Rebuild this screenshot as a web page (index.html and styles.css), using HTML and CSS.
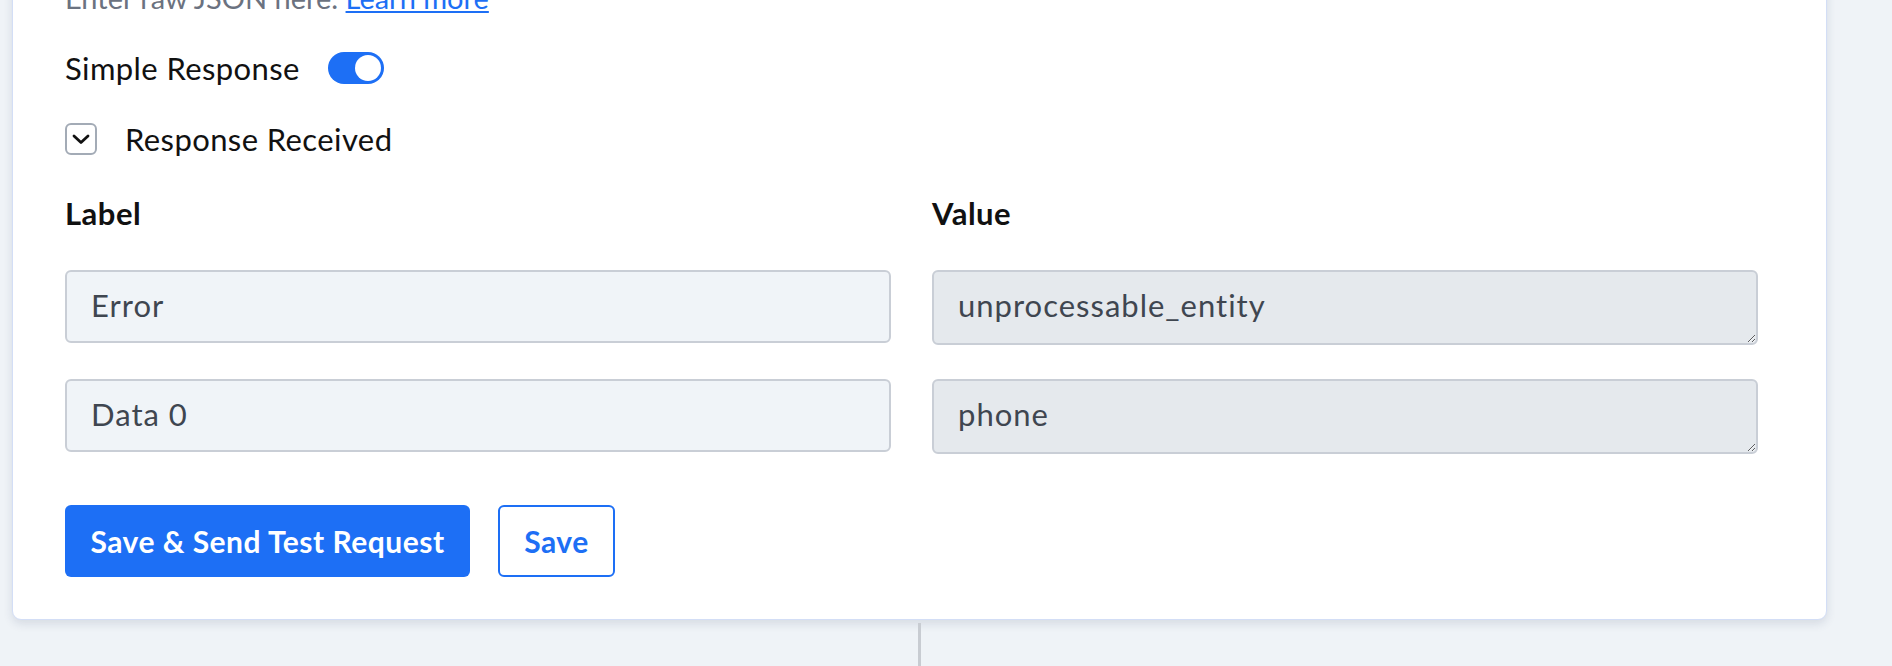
FILE: index.html
```html
<!DOCTYPE html>
<html lang="en">
<head>
  <meta charset="UTF-8">
  <meta name="viewport" content="width=device-width, initial-scale=1.0">
  <title>Webhook Step - Response</title>
  <link rel="stylesheet" href="styles.css">
</head>
<body>

<div class="flow">
  <div class="step-card">
    <p class="hint">Enter raw JSON here. <a href="#">Learn more</a></p>

    <div class="option-row">
      <span>Simple Response</span>
      <span class="toggle on"><span class="knob"></span></span>
    </div>

    <div class="option-row collapse-row">
      <span class="chevron-box">
        <svg width="18" height="18" viewBox="0 0 18 18"><path d="M2 6 L9 12.5 L16 6" fill="none" stroke="#111" stroke-width="2.8" stroke-linecap="round" stroke-linejoin="round"/></svg>
      </span>
      <span>Response Received</span>
    </div>

    <div class="response-grid">
      <div class="col-head">Label</div>
      <div class="col-head">Value</div>

      <input class="field label-field" type="text" value="Error" readonly>
      <textarea class="field value-field" readonly>unprocessable_entity</textarea>

      <input class="field label-field" type="text" value="Data 0" readonly>
      <textarea class="field value-field" readonly>phone</textarea>
    </div>

    <div class="actions">
      <button class="btn btn-primary">Save &amp; Send Test Request</button>
      <button class="btn btn-outline">Save</button>
    </div>
  </div>

  <div class="connector"></div>
</div>

</body>
</html>
```

FILE: styles.css
```css
/* General Styles */
body {
  font-family: Lato, "Open Sans", sans-serif;
  margin: 0;
  padding: 0;
  background: #eff3f7;
  color: #111;
  overflow: hidden;
}
.flow {
  display: flex;
  flex-direction: column;
  align-items: flex-start;
  padding-left: 12px;
}
/* Card */
.step-card {
  box-sizing: border-box;
  width: 1815px;
  margin-top: -50px;
  padding: 29px 68px 42px 52px;
  background: #fff;
  border: 1px solid #d3def6;
  border-radius: 9px;
  box-shadow: 0 4px 10px rgba(30, 50, 90, 0.12);
}
.hint {
  margin: 0 0 34px;
  font-size: 29px;
  line-height: 36px;
  color: #6b7280;
}
.hint a {
  color: #1d6ff5;
}
/* Toggle + collapse rows */
.option-row {
  display: flex;
  align-items: center;
  gap: 28px;
  height: 36px;
  font-size: 31px;
  letter-spacing: 0.4px;
  margin-bottom: 35px;
}
.collapse-row {
  margin-bottom: 38px;
}
.toggle {
  position: relative;
  width: 56px;
  height: 32px;
  border-radius: 16px;
  background: #c8ced6;
}
.toggle.on {
  background: #1d6ff5;
}
.knob {
  position: absolute;
  top: 3px;
  left: 3px;
  width: 26px;
  height: 26px;
  border-radius: 50%;
  background: #fff;
}
.toggle.on .knob {
  left: 27px;
}
.chevron-box {
  box-sizing: border-box;
  width: 32px;
  height: 32px;
  display: flex;
  align-items: center;
  justify-content: center;
  border: 2px solid #a3abb6;
  border-radius: 6px;
}
/* Label / Value grid */
.response-grid {
  display: grid;
  grid-template-columns: 1fr 1fr;
  column-gap: 41px;
  row-gap: 34px;
  align-items: start;
}
.col-head {
  font-size: 31px;
  font-weight: bold;
  letter-spacing: 0.5px;
  line-height: 36px;
  margin-bottom: 5px;
}
.field {
  box-sizing: border-box;
  width: 100%;
  margin: 0;
  padding: 0 24px;
  font-family: inherit;
  font-size: 31px;
  letter-spacing: 1px;
  color: #3f4650;
  border: 2px solid #c9ced6;
  border-radius: 6px;
  outline: none;
}
.label-field {
  height: 73px;
  padding-bottom: 3px;
  background: #f0f4f8;
}
.value-field {
  height: 75px;
  padding-top: 14px;
  line-height: 38px;
  background: #e5e9ed;
  resize: vertical;
  overflow: hidden;
}
/* Buttons */
.actions {
  display: flex;
  gap: 28px;
  margin-top: 51px;
}
.btn {
  height: 72px;
  padding: 0 20px;
  font-family: inherit;
  font-size: 30px;
  font-weight: bold;
  letter-spacing: 0.5px;
  border-radius: 6px;
  cursor: pointer;
}
.btn-primary {
  width: 405px;
  background: #1d6ff5;
  color: #fff;
  border: none;
}
.btn-outline {
  width: 117px;
  background: #fff;
  color: #1d6ff5;
  border: 2px solid #1d6ff5;
}
/* Connector below the card */
.connector {
  width: 3px;
  height: 50px;
  margin-top: 3px;
  margin-left: 906px;
  background: #c8ccd2;
}
```
